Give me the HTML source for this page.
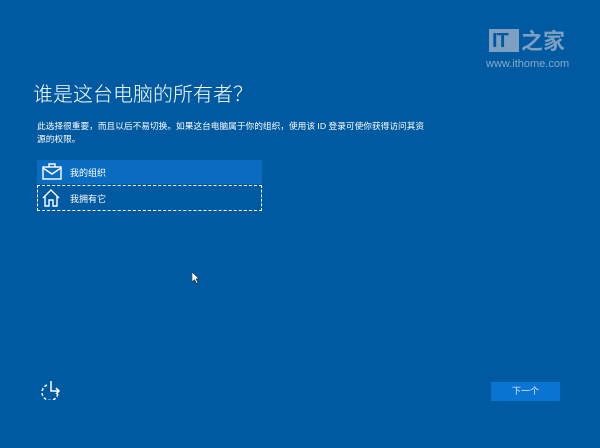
<!DOCTYPE html>
<html><head><meta charset="utf-8"><style>
body{margin:0;width:600px;height:448px;background:#005aa1;overflow:hidden;position:relative;font-family:"Liberation Sans","Noto Sans CJK SC",sans-serif;color:#fff}
.a{position:absolute}
</style></head><body>
<div class="a" style="left:489px;top:29px;width:30px;height:23px;background:#7d9fc2"></div>
<div class="a" style="left:492px;top:31px;font-size:20px;color:#005aa1;font-weight:bold;line-height:20px;letter-spacing:-1px;font-family:'Liberation Sans',sans-serif">IT</div>
<div class="a" style="left:521px;top:26px;font-size:22px;color:#7d9fc2;font-weight:bold;line-height:28px;font-family:'Noto Sans CJK SC',sans-serif">之家</div>
<div class="a" style="left:486px;top:58px;font-size:11px;color:#8aa9c8">www.ithome.com</div>
<div class="a" style="left:33px;top:79px;font-size:20px;line-height:28px;font-weight:300;font-family:'Noto Sans CJK SC',sans-serif">谁是这台电脑的所有者？</div>
<div class="a" style="left:37px;top:120px;font-size:8.7px;line-height:13px;width:400px">此选择很重要，而且以后不易切换。如果这台电脑属于你的组织，使用该 ID 登录可使你获得访问其资<br>源的权限。</div>
<div class="a" style="left:37px;top:160px;width:225px;height:24px;background:#0a6cc1"></div>
<svg class="a" style="left:42px;top:163px" width="20" height="18" viewBox="0 0 20 18" fill="none" stroke="#fff" stroke-width="1.4"><rect x="1" y="4" width="18" height="12"/><path d="M7 4V1h6v3M1 5l9 6 9-6"/></svg>
<div class="a" style="left:70px;top:166px;font-size:9px">我的组织</div>
<div class="a" style="left:37px;top:185px;width:223px;height:24px;border:1px dashed #fff"></div>
<svg class="a" style="left:42px;top:189px" width="18" height="18" viewBox="0 0 18 18" fill="none" stroke="#fff" stroke-width="1.4"><path d="M1 9L9 1l8 8M3 7v10h4v-6h4v6h4V7"/></svg>
<div class="a" style="left:70px;top:192px;font-size:9px">我拥有它</div>
<svg class="a" style="left:192px;top:272px" width="8" height="12" viewBox="0 0 8 12"><path d="M0 0v10l2.5-2.5 2 4 1.5-.7-2-4H7z" fill="#fff" stroke="#000" stroke-width=".5"/></svg>
<svg class="a" style="left:41px;top:380px" width="22" height="20" viewBox="0 0 22 20" fill="none" stroke="#fff" stroke-width="1.5"><path d="M6 5A8 8 0 1 0 17 13" stroke-dasharray="3 2"/><path d="M10 1v10h8M15 8l3 3-3 3"/></svg>
<div class="a" style="left:491px;top:382px;width:69px;height:19px;background:#0a74d3;font-size:9px;text-align:center;line-height:19px;color:#dfeefc">下一个</div>
</body></html>
